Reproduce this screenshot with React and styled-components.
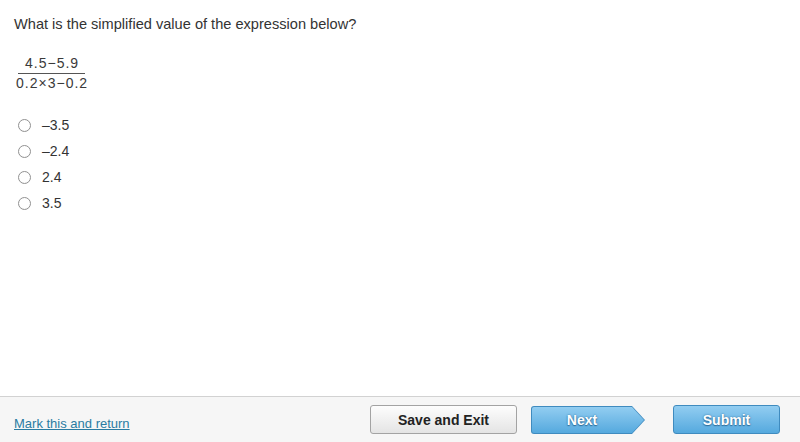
import styled, { createGlobalStyle } from 'styled-components';

const GlobalStyle = createGlobalStyle`
	html, body {
		margin: 0;
		padding: 0;
		background: #fff;
	}

	body {
		font-family: 'Liberation Sans', Arial, sans-serif;
		color: #333;
	}

	* {
		box-sizing: border-box;
	}
`;

const Page = styled.div`
	height: 442px;
	width: 800px;
	display: flex;
	flex-direction: column;
`;

const Main = styled.main`
	flex: 1;
	padding: 16px 14px 0;
`;

const Question = styled.p`
	margin: 0;
	font-size: 14.6px;
	line-height: 17px;
	color: #333;
`;

const Fraction = styled.div`
	display: inline-flex;
	flex-direction: column;
	align-items: center;
	margin: 23px 0 0 1px;
	font-size: 14px;
	letter-spacing: 1px;
	color: #3a3a3a;

	.num {
		line-height: 15px;
		padding: 0 6px 2px 7px;
		border-bottom: 1px solid #555;
	}

	.den {
		line-height: 15px;
		padding: 2px 0 0 1px;
	}
`;

const Options = styled.ul`
	list-style: none;
	margin: 21px 0 0;
	padding: 0;
`;

const Option = styled.li`
	display: flex;
	align-items: center;
	height: 26px;
	font-size: 14px;
	color: #333;
`;

const Radio = styled.span`
	width: 13px;
	height: 13px;
	border: 1px solid #919191;
	border-radius: 50%;
	background: radial-gradient(circle at 50% 40%, #fff 60%, #ededed 100%);
	margin: 0 11px 0 4px;
`;

const Footer = styled.footer`
	height: 46px;
	border-top: 1px solid #d2d2d2;
	background: #f6f6f6;
	display: flex;
	align-items: flex-start;
	padding: 8px 20px 0 14px;
`;

const MarkLink = styled.a`
	font-size: 13px;
	color: #2a7ca2;
	text-decoration: underline;
	margin-top: 11px;
	margin-right: auto;
	cursor: pointer;
`;

const GrayButton = styled.button`
	width: 147px;
	height: 29px;
	border: 1px solid #a3a3a3;
	border-radius: 3px;
	background: linear-gradient(#fdfdfd, #e4e4e4);
	font-family: inherit;
	font-size: 14px;
	font-weight: bold;
	color: #222;
	margin-right: 14px;
`;

const BlueButton = styled.button`
	width: ${(p) => p.w}px;
	height: 29px;
	border: 1px solid #3f8bbf;
	border-radius: 3px;
	background: linear-gradient(#92cdf1, #55a9de);
	font-family: inherit;
	font-size: 14px;
	font-weight: bold;
	color: #fff;
	text-shadow: 0 0 2px #2f6f9c, 0 1px 1px #2f6f9c;
	padding: 0;
`;

const ArrowShell = styled.div`
	width: 114px;
	height: 28px;
	margin: 1px 28px 0 0;
	background: #3f8bbf;
	border-radius: 3px;
	clip-path: polygon(0 0, 101px 0, 114px 50%, 101px 100%, 0 100%);
	padding: 1px;
`;

const ArrowButton = styled.button`
	display: block;
	width: 112px;
	height: 26px;
	border: 0;
	border-radius: 2px;
	background: linear-gradient(#92cdf1, #55a9de);
	clip-path: polygon(0 0, 100px 0, 112px 50%, 100px 100%, 0 100%);
	font-family: inherit;
	font-size: 14px;
	font-weight: bold;
	color: #fff;
	text-shadow: 0 0 2px #2f6f9c, 0 1px 1px #2f6f9c;
	padding: 0 12px 0 0;
`;

const ANSWERS = ['\u20133.5', '\u20132.4', '2.4', '3.5'];

export default function App() {
	return (
		<>
			<GlobalStyle />
			<Page>
				<Main>
					<Question>What is the simplified value of the expression below?</Question>
					<Fraction>
						<span className="num">4.5{'\u2212'}5.9</span>
						<span className="den">0.2{'\u00d7'}3{'\u2212'}0.2</span>
					</Fraction>
					<Options>
						{ANSWERS.map((answer) => (
							<Option key={answer}>
								<Radio />
								{answer}
							</Option>
						))}
					</Options>
				</Main>
				<Footer>
					<MarkLink>Mark this and return</MarkLink>
					<GrayButton>Save and Exit</GrayButton>
					<ArrowShell>
						<ArrowButton>Next</ArrowButton>
					</ArrowShell>
					<BlueButton w={107}>Submit</BlueButton>
				</Footer>
			</Page>
		</>
	);
}
